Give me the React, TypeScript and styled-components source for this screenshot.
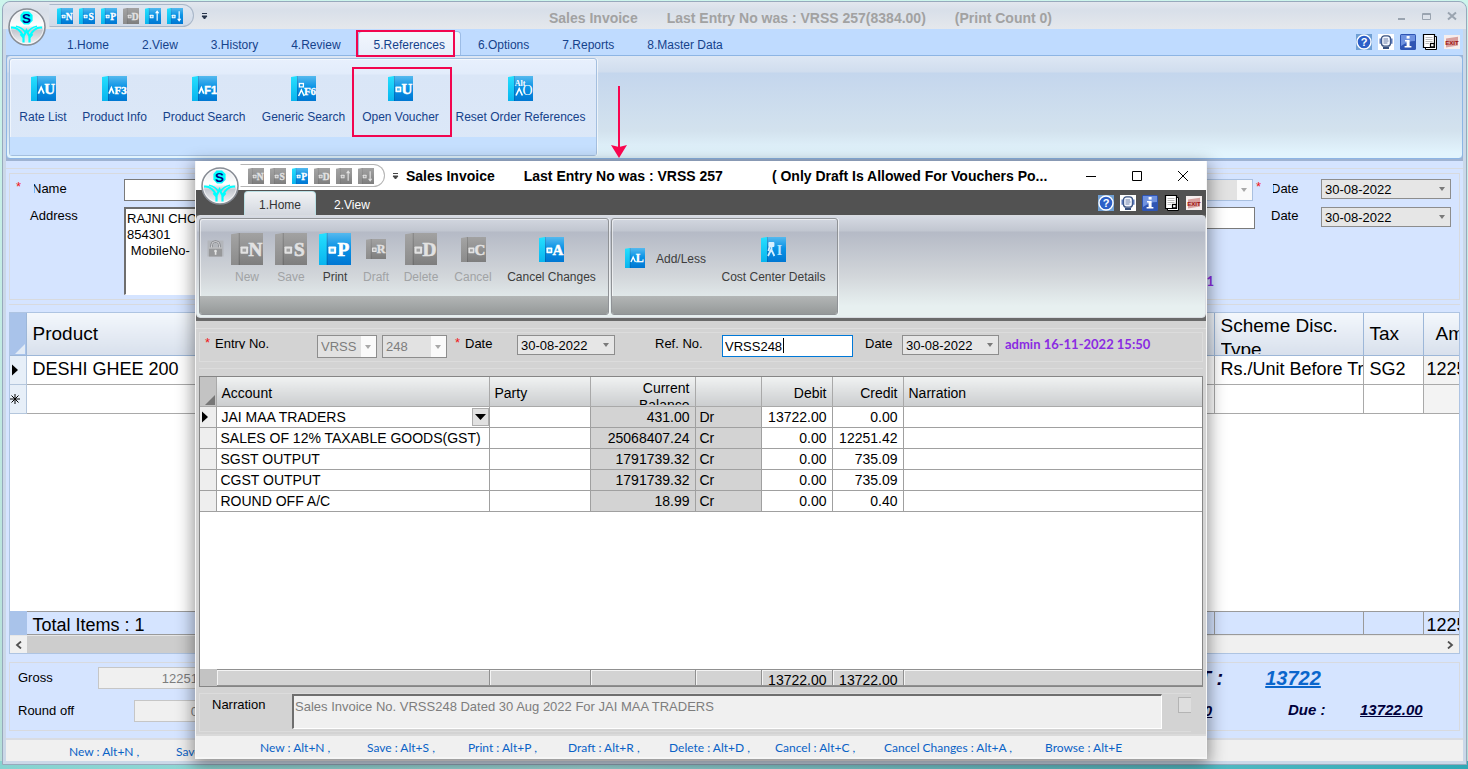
import React from 'react';
import styled, { createGlobalStyle, css } from 'styled-components';

const GlobalStyle = createGlobalStyle`
  *, *::before, *::after { box-sizing: border-box; }
  body { margin: 0; }
  body, button, input, textarea, select, table {
    font-family: "Liberation Sans", Arial, sans-serif;
    font-size: 13px;
  }
`;

/* ---------- drawings ---------- */

type Tone = 'blue' | 'gray';

const tones = {
  blue: { spineA: '#25e0ff', spineB: '#08b4ee', pageA: '#55b9ee', pageB: '#0a93e6', pageC: '#0077d2' },
  gray: { spineA: '#a4a4a4', spineB: '#8b8b8b', pageA: '#a2a2a2', pageB: '#939393', pageC: '#7d7d7d' },
};

interface BookProps {
  size: number;
  tone?: Tone;
  glyph?: string;
  kind?: 'key' | 'caret' | 'both' | 'alt' | 'up' | 'down' | 'tree';
}

const BookSvg = styled.svg`
  display: block;
  flex: none;
`;

const Book = ({ size, tone = 'blue', glyph = '', kind = 'key' }: BookProps) => {
  const c = tones[tone];
  const ink = tone === 'blue' ? '#ffffff' : '#e2e2e2';
  const long = glyph.length > 1;
  return (
    <BookSvg width={size} height={size} viewBox="0 0 25 25" aria-hidden="true">
      <defs>
        <linearGradient id={`spine-${tone}`} x1="0" y1="0" x2="0" y2="1">
          <stop offset="0" stopColor={c.spineA} />
          <stop offset="1" stopColor={c.spineB} />
        </linearGradient>
        <linearGradient id={`page-${tone}`} x1="0" y1="0" x2="0" y2="1">
          <stop offset="0" stopColor={c.pageA} />
          <stop offset="0.45" stopColor={c.pageB} />
          <stop offset="1" stopColor={c.pageC} />
        </linearGradient>
      </defs>
      <rect x="5" y="0" width="20" height="25" fill={`url(#page-${tone})`} />
      <path d="M0 1 L6 0 V25 H0Z" fill={`url(#spine-${tone})`} />
      <rect x="6" y="0" width="1" height="25" fill="#00000022" />
      {(kind === 'key' || kind === 'up' || kind === 'down') && (
        <>
          <rect x="7.4" y="10.6" width="6" height="5.6" rx="0.6" fill={ink} />
          <rect x="9" y="12.2" width="2.8" height="2.4" fill={c.pageA} />
        </>
      )}
      {kind === 'key' && (
        <text x="19" y="18" textAnchor="middle" fontFamily="Liberation Serif, serif" fontWeight="700" fontSize="15" stroke={ink} strokeWidth="0.5" fill={ink}>{glyph}</text>
      )}
      {kind === 'up' && <path d="M19 20V5M16.6 8.2L19 5L21.4 8.2" stroke={ink} strokeWidth="1.8" fill="none" />}
      {kind === 'down' && <path d="M19 5V20M16.6 16.8L19 20L21.4 16.8" stroke={ink} strokeWidth="1.8" fill="none" />}
      {kind === 'caret' && (
        <>
          <path d={long ? 'M7 17.6L9.4 12L11.8 17.6' : 'M7.4 17.6L10.2 11.4L13 17.6'} stroke={ink} strokeWidth="1.7" fill="none" />
          <text
            x="18.6"
            y="18"
            textAnchor="middle"
            fontFamily={glyph === 'F1' ? 'Liberation Sans, sans-serif' : 'Liberation Serif, serif'}
            fontWeight="700"
            fontSize={long ? 11 : 15}
            stroke={ink}
            strokeWidth="0.4"
            fill={ink}
          >
            {glyph}
          </text>
        </>
      )}
      {kind === 'both' && (
        <>
          <rect x="8.4" y="7.5" width="4" height="3.4" fill="none" stroke={ink} strokeWidth="1.3" />
          <path d="M7.6 20L10.4 14L13.2 20" stroke={ink} strokeWidth="1.5" fill="none" />
          <text x="19" y="19" textAnchor="middle" fontFamily="Liberation Serif, serif" fontWeight="700" fontSize="11" stroke={ink} strokeWidth="0.3" fill={ink}>{glyph}</text>
        </>
      )}
      {kind === 'alt' && (
        <>
          <text x="12" y="10" textAnchor="middle" fontFamily="Liberation Serif, serif" fontWeight="700" fontSize="8" fill={ink}>Alt</text>
          <path d="M8 19.5L11.2 12.6L14.4 19.5" stroke={ink} strokeWidth="1.6" fill="none" />
          <text x="19.6" y="18.5" textAnchor="middle" fontFamily="Liberation Serif, serif" fontSize="14" fill={ink}>{glyph}</text>
        </>
      )}
      {kind === 'tree' && (
        <>
          <rect x="7.4" y="5" width="6" height="5" rx="1" fill="#d8f0ff" />
          <path d="M10.5 10V15M10.5 12L7 19M10.5 13L13.4 19M8.5 10L7.4 14" stroke="#d8f0ff" strokeWidth="1.8" fill="none" />
          <text x="18.6" y="18" textAnchor="middle" fontFamily="Liberation Serif, serif" fontWeight="700" fontSize="14" fill="#b9e4ff">{glyph}</text>
        </>
      )}
    </BookSvg>
  );
};

const LogoSvg = styled.svg`
  position: absolute;
  left: 4px;
  top: 4px;
  z-index: 2;
`;

const Logo = () => (
  <LogoSvg width="40" height="42" viewBox="0 0 40 42" role="img" aria-label="Application menu">
    <defs>
      <linearGradient id="orb" x1="0" y1="0" x2="0" y2="1">
        <stop offset="0" stopColor="#e4e6ea" />
        <stop offset="0.45" stopColor="#ffffff" />
        <stop offset="0.6" stopColor="#c4c8d0" />
        <stop offset="1" stopColor="#f4f5f7" />
      </linearGradient>
    </defs>
    <circle cx="20" cy="21" r="18" fill="url(#orb)" stroke="#888d95" strokeWidth="1.6" />
    <circle cx="20" cy="21" r="16.6" fill="none" stroke="#ffffffb0" strokeWidth="1" />
    <path d="M16.5 5.6H22L25.6 9V14.8L22 18.6H17L13.4 14.8V9Z" fill="#00ffff" />
    <text x="19.5" y="17" textAnchor="middle" fontFamily="Liberation Sans, sans-serif" fontWeight="700" fontSize="13.5" fill="#000080">S</text>
    <path
      d="M4 21.6C9 21 13 23.5 16.5 30.5L19.5 24.5L22.5 30.5C26 23.5 30 21 35 21.6"
      fill="none"
      stroke="#00ffff"
      strokeWidth="2.2"
    />
    <path d="M9 20.2C13 21 16 22.5 18 26M30 20.2C26 21 23 22.5 21 26" fill="none" stroke="#00ffff" strokeWidth="1.6" />
    <path d="M13.6 28L16.5 31.6V36.6M25.4 28L22.5 31.6V36.6" fill="none" stroke="#00ffff" strokeWidth="2.2" />
  </LogoSvg>
);

const Lock = () => (
  <svg width="17" height="17" viewBox="0 0 17 17" aria-hidden="true">
    <rect x="0.5" y="0.5" width="16" height="16" fill="#b3b6bb" />
    <path d="M4.5 8V5.5A4 4 0 0 1 12.5 5.5V8" fill="none" stroke="#85878b" strokeWidth="2.4" />
    <path d="M4.5 8V5.5A4 4 0 0 1 12.5 5.5V8" fill="none" stroke="#dcdddf" strokeWidth="0.9" />
    <rect x="2" y="7.5" width="13" height="9" fill="#97989a" />
    <rect x="2" y="7.5" width="13" height="1" fill="#cfd0d2" />
    <circle cx="8.5" cy="11" r="1.3" fill="#e4e4e4" />
    <rect x="7.8" y="11" width="1.6" height="3.8" fill="#e4e4e4" />
  </svg>
);

const Tools = styled.div`
  display: flex;
  gap: 6px;
  align-items: center;
  margin-left: auto;
`;

const ToolButton = styled.button`
  display: block;
  width: 16px;
  height: 16px;
  padding: 0;
  border: 0;
  background: none;
  svg { display: block; }
`;

const ToolIcons = () => (
  <Tools>
    <ToolButton aria-label="Help">
      <svg width="16" height="16" viewBox="0 0 16 16">
        <rect width="16" height="16" fill="#6f9fd4" />
        <circle cx="8" cy="8" r="7" fill="#2c5fc8" stroke="#ffffff" strokeWidth="1.4" />
        <text x="8" y="12.2" textAnchor="middle" fontFamily="Liberation Sans, sans-serif" fontWeight="700" fontSize="11" fill="#fff">?</text>
      </svg>
    </ToolButton>
    <ToolButton aria-label="Remarks">
      <svg width="16" height="16" viewBox="0 0 16 16">
        <rect width="16" height="16" fill="#fff" />
        <rect x="3.5" y="1.8" width="9" height="10.4" rx="3" fill="#f4f7ff" stroke="#37507e" strokeWidth="1.3" />
        <path d="M5.5 5H10M5.5 7H10.5M5.5 9H9.5" stroke="#6b7fa6" strokeWidth="1" />
        <path d="M2.4 4.5V9.8M13.6 4.5V9.8" stroke="#5877b8" strokeWidth="1.8" />
        <path d="M5 14H11" stroke="#37507e" strokeWidth="2" />
      </svg>
    </ToolButton>
    <ToolButton aria-label="Information">
      <svg width="16" height="16" viewBox="0 0 16 16">
        <rect width="16" height="16" rx="1.5" fill="#2f55b4" />
        <path d="M1 1H15V7C10 7 5 9 1 12Z" fill="#6f92e0" />
        <rect x="6.6" y="2" width="3" height="2.6" fill="#fff" />
        <path d="M5 6H9.6V12H11.4V13.6H4.6V12H6.6V7.6H5Z" fill="#fff" />
      </svg>
    </ToolButton>
    <ToolButton aria-label="Notes">
      <svg width="16" height="16" viewBox="0 0 16 16">
        <path d="M3.5 2.5H14.5V15.5H3.5Z" fill="#fff" stroke="#000" strokeWidth="1" />
        <path d="M1.5 0.5H12.5V13.5H1.5Z" fill="#fff" stroke="#000" strokeWidth="1.2" />
        <path d="M3.5 3.5H10.5M3.5 5.5H10.5M3.5 7.5H10.5M3.5 9.5H7" stroke="#b4b4b4" strokeWidth="0.9" />
        <rect x="8.5" y="9.5" width="3.6" height="3.4" fill="#fff" stroke="#000" strokeWidth="1.2" />
      </svg>
    </ToolButton>
    <ToolButton aria-label="Close application">
      <svg width="16" height="16" viewBox="0 0 16 16">
        <rect y="1" width="16" height="14" fill="#f6eeed" />
        <path d="M2 4.6L14 2.8V11.6L2 13.4Z" fill="#d8a09e" />
        <text x="8" y="11" textAnchor="middle" fontFamily="Liberation Sans, sans-serif" fontWeight="700" fontSize="6" fill="#9c0f0f">EXIT</text>
      </svg>
    </ToolButton>
  </Tools>
);

/* ---------- desktop and windows ---------- */

const Desktop = styled.div`
  position: relative;
  display: flex;
  flex-direction: column;
  min-height: 100vh;
  padding: 1px 1px 4px 2px;
  background: linear-gradient(to right, #86d3d0, #a2dcdc 40%, #2fa9b6) bottom / 100% 8px no-repeat,
    linear-gradient(#cdf5ec, #b4dfd8);
`;

const MainWindow = styled.main`
  flex: 1;
  display: flex;
  flex-direction: column;
  padding-bottom: 3px;
  border: 1px solid #97a9bc;
  border-radius: 8px 8px 0 0;
  background: #cbd8e8;
`;

const Titlebar = styled.header`
  position: relative;
  display: flex;
  align-items: center;
  height: 27px;
  padding-left: 46px;
  border-radius: 8px 8px 0 0;
  background: linear-gradient(#e3e7ee, #d8dfe9 30%, #e5e8ec);
`;

const QuickBar = styled.div<{ $plain?: boolean }>`
  display: flex;
  align-items: center;
  gap: 6px;
  height: 23px;
  padding: 0 10px 0 7px;
  border: 1px solid ${p => (p.$plain ? '#b4b4b4' : '#a9b7c9')};
  border-left-color: transparent;
  border-radius: 0 12px 12px 0;
  background: ${p => (p.$plain ? '#ffffff' : 'linear-gradient(#dfe6f0, #d0dae8)')};
`;

const QuickButton = styled.button`
  padding: 0;
  border: 0;
  background: none;
`;

const MoreButton = styled.button`
  display: block;
  width: 8px;
  padding: 0;
  margin-left: 7px;
  border: 0;
  background: none;
  svg { display: block; }
`;

const More = ({ color }: { color: string }) => (
  <MoreButton aria-label="Customise toolbar">
    <svg width="7" height="8" viewBox="0 0 7 8">
      <path d="M1 1.5H6M1 4H6L3.5 7Z" stroke={color} strokeWidth="1" fill={color} />
    </svg>
  </MoreButton>
);

const Title = styled.h1<{ $dim?: boolean }>`
  flex: 1;
  display: flex;
  justify-content: ${p => (p.$dim ? 'center' : 'flex-start')};
  gap: 29px;
  margin: 0;
  padding: ${p => (p.$dim ? '5px 4px 0 0' : '0 0 0 6px')};
  font-size: 14px;
  line-height: 20px;
  white-space: nowrap;
  color: ${p => (p.$dim ? '#a2a2a2' : '#000000')};
`;

const DraftNote = styled.span`
  padding-left: 20px;
`;

const Controls = styled.div<{ $wide?: boolean }>`
  display: flex;
  gap: ${p => (p.$wide ? 34 : 13)}px;
  padding-right: ${p => (p.$wide ? 17 : 8)}px;
  button {
    width: 12px;
    height: 12px;
    padding: 0;
    border: 0;
    background: none;
  }
  svg { display: block; }
`;

const WindowControls = ({ wide }: { wide?: boolean }) => {
  const ink = wide ? '#000000' : '#9aa4b0';
  return (
    <Controls $wide={wide}>
      <button aria-label="Minimise">
        <svg width="12" height="12"><path d={wide ? 'M1 6.5H11' : 'M2 9H9'} stroke={ink} strokeWidth={wide ? 1 : 2} /></svg>
      </button>
      <button aria-label="Maximise">
        <svg width="12" height="12">
          <path d={wide ? 'M1.5 1.5H10.5V10.5H1.5Z' : 'M1.5 3.5H9.5V9.5H1.5ZM1.5 4.5H9.5'} stroke={ink} fill="none" />
        </svg>
      </button>
      <button aria-label="Close">
        <svg width="12" height="12"><path d={wide ? 'M1 1L11 11M11 1L1 11' : 'M2 2.5L10 9.5M10 2.5L2 9.5'} stroke={ink} strokeWidth={wide ? 1 : 2} /></svg>
      </button>
    </Controls>
  );
};

/* ---------- ribbon ---------- */

const TabStrip = styled.nav<{ $dark?: boolean }>`
  display: flex;
  align-items: center;
  height: ${p => (p.$dark ? 25 : 26)}px;
  padding: ${p => (p.$dark ? '0 4px 0 48px' : '0 3px 0 45px')};
  margin: ${p => (p.$dark ? '0' : '0 3px')};
  background: ${p => (p.$dark ? '#525252' : '#bfdbff')};
`;

const highlight = css`
  content: '';
  position: absolute;
  z-index: 2;
  border: 2px solid #f2054f;
  pointer-events: none;
`;

const Tab = styled.button<{ $active?: boolean; $dark?: boolean; $marked?: boolean }>`
  position: relative;
  align-self: flex-end;
  height: 24px;
  padding: ${p => (p.$dark ? '2px 14px 0' : '3px 15px 0')};
  margin-right: ${p => (p.$dark ? 3 : 1)}px;
  border: 1px solid transparent;
  border-bottom: 0;
  border-radius: 4px 4px 0 0;
  background: none;
  font-size: 12px;
  white-space: nowrap;
  color: ${p => (p.$dark ? '#ffffff' : '#15428b')};
  ${p => p.$active && !p.$dark && css`
    border-color: #9cbce6;
    background: linear-gradient(#f2f6fd, #e6eefa);
  `}
  ${p => p.$active && p.$dark && css`
    border-color: #b9dfe4;
    background: linear-gradient(#f1f3f5, #d3d7df);
    color: #333333;
  `}
  ${p => p.$marked && css`
    &::after { ${highlight} inset: -2px 5px -2px -3px; }
  `}
`;

const Ribbon = styled.div<{ $dark?: boolean }>`
  position: relative;
  display: flex;
  gap: 2px;
  height: ${p => (p.$dark ? 103 : 104)}px;
  padding: 2px;
  border: 1px solid ${p => (p.$dark ? '#d8dbe0' : '#8db5e4')};
  border-radius: 4px;
  background: ${p =>
    p.$dark
      ? 'linear-gradient(#d6dae3, #c1c6d0 15px, #b5bac6 16px, #d2d6da 60px, #e7f0f0 90px)'
      : 'linear-gradient(#dde7f4, #d0ddee 16px, #c4d6ed 17px, #d3e2ee 75px, #e2f4fd 97px)'};
`;

const RibbonShade = styled.div<{ $dark?: boolean }>`
  background: ${p => (p.$dark ? '#6a6a6a' : '#9fb3d2')};
  margin: ${p => (p.$dark ? '0' : '0 3px')};
  padding-bottom: ${p => (p.$dark ? 3 : 2)}px;
`;

const Group = styled.section<{ $dark?: boolean }>`
  display: flex;
  flex-direction: column;
  border: 1px solid ${p => (p.$dark ? '#8f9296' : '#a4bfdf')};
  border-radius: 3px;
  overflow: ${p => (p.$dark ? 'hidden' : 'visible')};
  box-shadow: inset 1px 1px 0 #ffffff90, 1px 0 0 #ffffffa0;
  background: ${p => (p.$dark ? 'none' : 'linear-gradient(#e8f0fd, #e2ecfb 15px, #dae6f7 16px, #dce8f8)')};
`;

const GroupItems = styled.div<{ $dark?: boolean }>`
  flex: 1;
  display: flex;
  padding: ${p => (p.$dark ? '13px 4px 0 3px' : '13px 3px 0 1px')};
`;

const GroupFoot = styled.div<{ $dark?: boolean }>`
  height: 18px;
  background: ${p => (p.$dark ? 'linear-gradient(#b3b6b6, #959999)' : '#c5dffe')};
`;

const Command = styled.button<{ $width: number; $dark?: boolean; $marked?: boolean; $row?: boolean }>`
  position: relative;
  display: flex;
  flex-direction: ${p => (p.$row ? 'row' : 'column')};
  align-items: center;
  gap: ${p => (p.$row ? 11 : 0)}px;
  align-self: flex-start;
  width: ${p => p.$width}px;
  padding: ${p => (p.$row ? '16px 0 0 10px' : '0')};
  border: 0;
  background: none;
  font-size: 12px;
  line-height: 16px;
  white-space: nowrap;
  color: ${p => (p.$dark ? '#3c3c3c' : '#15428b')};
  &:disabled { color: #a1a3a5; }
  ${p => p.$marked && css`
    &::after { ${highlight} inset: -5px -4px -12px -1px; }
  `}
`;

const IconSlot = styled.span<{ $tall?: boolean }>`
  display: flex;
  align-items: center;
  justify-content: center;
  height: ${p => (p.$tall ? 34 : 32)}px;
  margin-bottom: ${p => (p.$tall ? 3 : 5)}px;
`;

const LockButton = styled.button`
  align-self: flex-start;
  width: 22px;
  padding: 8px 0 0 2px;
  border: 0;
  background: none;
`;

const Arrow = styled.svg`
  position: absolute;
  left: 603px;
  top: 30px;
  z-index: 3;
`;

/* ---------- form parts ---------- */

const Body = styled.div<{ $dark?: boolean }>`
  flex: 1;
  display: flex;
  flex-direction: column;
  margin: ${p => (p.$dark ? '0' : '0 3px')};
  padding-top: 7px;
  background: ${p => (p.$dark ? '#d3d3d3' : '#d5e4ff')};
`;

const BodyInner = styled.div<{ $dark?: boolean }>`
  flex: 1;
  display: flex;
  flex-direction: column;
  padding: ${p => (p.$dark ? '3px 3px 2px' : '4px 3px 7px')};
  border-top: 1px solid ${p => (p.$dark ? '#dedede' : '#d8dbe0')};
`;

const Panel = styled.section<{ $dark?: boolean }>`
  border: 1px solid ${p => (p.$dark ? '#dcdcdc' : '#d8dade')};
`;

const GridPanel = styled.section<{ $dark?: boolean }>`
  flex: 1;
  display: flex;
  flex-direction: column;
  margin: ${p => (p.$dark ? '6px 0 6px' : '4px 0 8px')};
  padding-top: 7px;
  border: 1px solid ${p => (p.$dark ? '#dcdcdc' : '#d8dade')};
  border-bottom: 0;
  border-left: 0;
  border-right: 0;
`;

const Star = styled.span`
  color: #f01818;
  font-size: 13px;
  line-height: 16px;
`;

const Label = styled.label`
  font-size: 13px;
  line-height: 16px;
  white-space: nowrap;
  color: #000000;
`;

const ClippedLabel = styled(Label)<{ $side: 'left' | 'bottom' }>`
  display: block;
  overflow: hidden;
  ${p => (p.$side === 'left' ? 'clip-path: inset(0 0 0 2px);' : 'height: 13px;')}
`;

const SelectBox = styled.span<{ $h: number }>`
  position: relative;
  display: block;
  height: ${p => p.$h}px;
  svg { position: absolute; right: 6px; top: 50%; margin-top: -2px; pointer-events: none; }
`;

const NativeSelect = styled.select<{ $look: 'date' | 'off' | 'offBlue' }>`
  appearance: none;
  display: block;
  width: 100%;
  height: 100%;
  padding: 0 0 0 3px;
  border: 1px solid ${p => (p.$look === 'offBlue' ? '#a9c0e0' : '#8d8d8d')};
  border-radius: 0;
  background: ${p => (p.$look === 'date' ? '#e6e6e6' : 'linear-gradient(to left, #fafafa 15px, #e2e2e2 15px)')};
  color: ${p => (p.$look === 'date' ? '#000000' : '#7d7d7d')};
  opacity: 1;
`;

const Picker = ({ id, value, look = 'date', h = 20, label }: { id: string; value: string; look?: 'date' | 'off' | 'offBlue'; h?: number; label?: string }) => (
  <SelectBox $h={h}>
    <NativeSelect id={id} $look={look} disabled={look !== 'date'} defaultValue={value} aria-label={label}>
      <option>{value}</option>
    </NativeSelect>
    <svg width="6" height="4"><path d="M0 0H6L3 4Z" fill={look === 'date' ? '#7a7a7a' : '#a8a8a8'} /></svg>
  </SelectBox>
);

const TextBox = styled.input<{ $focus?: boolean }>`
  display: block;
  width: 100%;
  height: 22px;
  padding: 1px 2px;
  border: ${p => (p.$focus ? '1px solid #0078d7' : '1px solid #7a7a7a')};
  outline: 0;
  background: #ffffff;
  color: #000000;
  font-size: 13px;
  &:disabled {
    border-color: #c6c6c6;
    background: #f0f0f0;
    color: #7d7d7d;
    text-align: right;
  }
`;

const RefBox = styled.span`
  position: relative;
  display: block;
  &::after {
    content: '';
    position: absolute;
    left: 61px;
    top: 3px;
    width: 1px;
    height: 15px;
    background: #000000;
  }
`;

const Area = styled.textarea<{ $off?: boolean }>`
  display: block;
  width: 100%;
  padding: ${p => (p.$off ? '3px 1px' : '2px 1px')};
  border: 1px solid #ffffff;
  border-top: 2px solid #6e6e6e;
  border-left: 2px solid #6e6e6e;
  border-radius: 0;
  background: ${p => (p.$off ? '#f0f0f0' : '#ffffff')};
  color: ${p => (p.$off ? '#7d7d7d' : '#000000')};
  font-size: 13px;
  line-height: 16px;
  resize: none;
  overflow: hidden;
`;

const NarrationArea = styled(Area)`
  height: 35px;
`;

const Stamp = styled.span`
  font-family: Lato, sans-serif;
  font-size: 13px;
  font-weight: 700;
  line-height: 16px;
  white-space: nowrap;
  color: #8a2be2;
`;

const PartyPanel = styled(Panel)`
  display: flex;
  justify-content: space-between;
  height: 127px;
  padding: 5px 8px 0 6px;
`;

const PartyFields = styled.div`
  display: grid;
  grid-template-columns: 14px 94px 300px;
  grid-template-rows: 22px 88px;
  row-gap: 6px;
`;

const DateFields = styled.div`
  display: grid;
  grid-template-columns: 240px 18px 50px 130px;
  grid-template-rows: 22px 22px 22px;
  row-gap: 6px;
`;

const LongBox = styled.div`
  margin-right: -2px;
`;

const MainStamp = styled.div`
  grid-column: 1;
  padding: 38px 39px 0 0;
  text-align: right;
`;

const Pad = styled.div<{ $t?: number; $l?: number }>`
  padding: ${p => p.$t || 0}px 0 0 ${p => p.$l || 0}px;
`;

/* ---------- grids ---------- */

const Sheet = styled.div<{ $dark?: boolean }>`
  flex: 1;
  display: flex;
  flex-direction: column;
  border: 1px solid ${p => (p.$dark ? '#858585' : '#aec4e2')};
  background: #ffffff;
  overflow: hidden;
`;

const Spacer = styled.div`
  flex: 1;
`;

const ItemTable = styled.table`
  width: 100%;
  table-layout: fixed;
  border-collapse: collapse;
  font-size: 18px;
  th, td {
    height: 29px;
    padding: 0 0 0 6px;
    border: solid #a9a9a9;
    border-width: 0 1px 1px 0;
    font-weight: 400;
    text-align: left;
    white-space: nowrap;
    overflow: hidden;
  }
  thead th {
    height: 42px;
    border-color: #9db7d8;
    background: linear-gradient(#f3f7fc, #d8e0ec);
    font-size: 19px;
  }
  thead th:first-child { background: #a9c3ea; vertical-align: bottom; }
  th:first-child { padding: 0; }
  tbody th { background: #e7eff8; border-color: #b4c6dc; }
  td:last-child, th:last-child { border-right: 0; }
  tbody td:last-child { background: #f3f3f3; padding-left: 3px; text-overflow: clip; }
`;

const TotalsTable = styled(ItemTable)`
  td {
    height: 23px;
    padding-top: 4px;
    border-color: #9a9a9a;
    border-top: 1px solid #9a9a9a;
    background: #d5e4ff;
    line-height: 18px;
  }
  td:first-child { background: #a9c3ea; border-color: #a9c3ea; }
  tbody td:last-child { background: #d5e4ff; }
`;

const TwoLines = styled.div`
  height: 41px;
  padding-top: 1px;
  line-height: 24px;
  white-space: normal;
  overflow: hidden;
`;

const Inset = styled.span`
  padding-left: 6px;
`;

const Scroller = styled.div`
  display: flex;
  height: 18px;
  border-top: 1px solid #e6e6e6;
  background: #f0f0f0;
  button {
    width: 17px;
    padding: 0;
    border: 0;
    background: #f0f0f0;
  }
  svg { display: block; margin: auto; }
`;

const Thumb = styled.div`
  width: 60%;
  background: #cdcdcd;
`;

const ScrollTrack = styled.div`
  flex: 1;
`;

const EntryTable = styled.table`
  width: 100%;
  table-layout: fixed;
  border-collapse: collapse;
  font-size: 14px;
  th, td {
    height: 21px;
    padding: 0 5px 0 4px;
    border: solid #a0a0a0;
    border-width: 0 1px 1px 0;
    font-weight: 400;
    text-align: left;
    white-space: nowrap;
    overflow: hidden;
  }
  thead th {
    height: 29px;
    padding-top: 3px;
    padding-left: 5px;
    border-color: #a9a9a9;
    background: linear-gradient(#f0f2f2, #cbcdcf);
  }
  thead th:first-child { background: #c3c3c3; padding: 0; vertical-align: bottom; }
  tbody th { padding: 0; background: #eeeeee; }
  td:last-child, th:last-child { border-right: 0; }
`;

const Num = styled.td<{ $shade?: boolean }>`
  && { text-align: right; ${p => p.$shade && 'background: #d3d3d3;'} }
`;

const NumHead = styled.th`
  && { text-align: right; }
`;

const Side = styled.td`
  background: #d3d3d3;
`;

const BalanceHead = styled.div`
  height: 25px;
  line-height: 17px;
  white-space: normal;
  overflow: hidden;
`;

const AccountCell = styled.div`
  display: flex;
  align-items: center;
  justify-content: space-between;
  margin-right: -5px;
  padding-left: 1px;
  button {
    width: 17px;
    height: 18px;
    padding: 0;
    border: 1px solid #adadad;
    background: #e1e1e1;
  }
  svg { display: block; margin: auto; }
`;

const SumTable = styled(EntryTable)`
  td {
    height: 16px;
    padding-top: 1px;
    border-color: #909090;
    border-top: 1px solid #909090;
    background: #d3d3d3;
    box-shadow: inset 1px 1px 0 #f4f4f4;
  }
  td:first-child { background: #c3c3c3; border-color: #c3c3c3; box-shadow: none; }
`;

const Clip = styled.div`
  height: 14px;
  line-height: 19px;
  overflow: hidden;
`;

const BlockSvg = styled.svg`
  display: block;
`;

const Marker = () => (
  <BlockSvg width="15" height="12" viewBox="0 0 15 12" aria-hidden="true">
    <path d="M2 0.5L8 6L2 11.5Z" fill="#000" />
  </BlockSvg>
);

const Corner = ({ color }: { color: string }) => (
  <BlockSvg width="15" height="12" viewBox="0 0 15 12" aria-hidden="true">
    <path d="M15 1V11H5Z" fill={color} />
  </BlockSvg>
);

/* ---------- bottom areas ---------- */

const TotalsPanel = styled(Panel)`
  display: flex;
  justify-content: space-between;
  height: 69px;
  padding: 4px 37px 0 8px;
`;

const GrossFields = styled.div`
  display: grid;
  grid-template-columns: 80px 36px 85px;
  grid-template-rows: 22px 22px;
  row-gap: 11px;
  align-items: center;
`;

const WideCell = styled.div`
  grid-column: 2 / 4;
`;

const BigFigure = styled.a`
  color: #0a66cc;
`;

const NetGrid = styled.div`
  display: grid;
  grid-template-columns: 117px 72px 62px;
  grid-template-rows: 22px 24px;
  row-gap: 8px;
  align-items: center;
  font-size: 15px;
  font-style: italic;
  font-weight: 700;
  color: #00003c;
`;

const NetLine = styled.div`
  grid-column: 1 / 4;
  display: flex;
  gap: 42px;
  font-size: 20px;
`;

const Hints = styled.footer<{ $dark?: boolean }>`
  display: flex;
  align-items: center;
  height: 23px;
  padding: ${p => (p.$dark ? '2px 0 0 64px' : '2px 0 0 63px')};
  margin: ${p => (p.$dark ? '0' : '0 3px')};
  border-top: 2px solid ${p => (p.$dark ? '#dadada' : '#d9dce2')};
  background: #f0f0f0;
`;

const Hint = styled.span<{ $width: number }>`
  flex: none;
  width: ${p => p.$width}px;
  font-family: Lato, sans-serif;
  font-size: 12px;
  line-height: 16px;
  white-space: nowrap;
  color: #0a62c6;
`;

const hints: [string, number][] = [
  ['New : Alt+N ,', 107],
  ['Save : Alt+S ,', 101],
  ['Print : Alt+P ,', 100],
  ['Draft : Alt+R ,', 101],
  ['Delete : Alt+D ,', 106],
  ['Cancel : Alt+C ,', 109],
  ['Cancel Changes : Alt+A ,', 161],
  ['Browse : Alt+E', 100],
];

const HintBar = ({ dark }: { dark?: boolean }) => (
  <Hints $dark={dark}>
    {(dark ? hints : hints.slice(0, 2)).map(([text, width]) => <Hint key={text} $width={width}>{text}</Hint>)}
  </Hints>
);

/* ---------- voucher dialog ---------- */

const Dialog = styled.section`
  position: absolute;
  top: 161px;
  left: 195px;
  right: 261px;
  bottom: 10px;
  display: flex;
  flex-direction: column;
  border: solid #f6f6f6;
  border-width: 0 1px 2px;
  background: #d3d3d3;
  box-shadow: 0 5px 16px 2px rgba(0, 0, 0, 0.42);
`;

const DialogTitle = styled(Titlebar)`
  height: 29px;
  border-radius: 0;
  background: #ffffff;
  padding-left: 44px;
`;

const EntryPanel = styled(Panel)`
  display: grid;
  grid-template-columns: 10px 102px 60px 5px 65px 8px 10px 52px 98px 40px 67px 131px 12px 37px 97px 6px auto;
  align-items: start;
  height: 30px;
  padding: 2px 0 0 5px;
`;

const NarrationPanel = styled(Panel)`
  display: grid;
  grid-template-columns: 80px 1fr 13px;
  height: 39px;
  margin-right: 12px;
  padding-left: 12px;
  border-right: 0;
  overflow: hidden;
`;

const AreaSlot = styled.div`
  padding-right: 16px;
`;

const TickBox = styled.input`
  appearance: none;
  width: 16px;
  height: 16px;
  margin: 3px 0 0;
  border: 1px solid #b4b4b4;
  background: #dedede;
`;

const entries = [
  ['JAI MAA TRADERS', '431.00', 'Dr', '13722.00', '0.00'],
  ['SALES OF 12% TAXABLE GOODS(GST)', '25068407.24', 'Cr', '0.00', '12251.42'],
  ['SGST OUTPUT', '1791739.32', 'Cr', '0.00', '735.09'],
  ['CGST OUTPUT', '1791739.32', 'Cr', '0.00', '735.09'],
  ['ROUND OFF A/C', '18.99', 'Cr', '0.00', '0.40'],
];

const EntryColumns = () => (
  <colgroup>
    {[16, 273, 101, 105, 66, 71, 71].map((w, i) => <col key={i} width={w} />)}
    <col />
  </colgroup>
);

const ItemColumns = () => (
  <colgroup>
    <col width={16} />
    <col />
    <col width={149} />
    <col width={60} />
    <col width={36} />
  </colgroup>
);

const quick: { name: string; glyph?: string; kind?: 'up' | 'down' }[] = [
  { name: 'New', glyph: 'N' },
  { name: 'Save', glyph: 'S' },
  { name: 'Print', glyph: 'P' },
  { name: 'Delete', glyph: 'D' },
  { name: 'Previous', kind: 'up' },
  { name: 'Next', kind: 'down' },
];

const Quick = ({ plain }: { plain?: boolean }) => (
  <QuickBar $plain={plain}>
    {quick.map(q => (
      <QuickButton key={q.name} aria-label={q.name}>
        <Book
          size={16}
          glyph={q.glyph}
          kind={q.kind || 'key'}
          tone={(plain ? q.name === 'Print' : q.name !== 'Delete') ? 'blue' : 'gray'}
        />
      </QuickButton>
    ))}
  </QuickBar>
);

const menu = ['1.Home', '2.View', '3.History', '4.Review', '5.References', '6.Options', '7.Reports', '8.Master Data'];

const commands: { text: string; width: number; glyph: string; kind: BookProps['kind'] }[] = [
  { text: 'Rate List', width: 64, glyph: 'U', kind: 'caret' },
  { text: 'Product Info', width: 79, glyph: 'F3', kind: 'caret' },
  { text: 'Product Search', width: 100, glyph: 'F1', kind: 'caret' },
  { text: 'Generic Search', width: 99, glyph: 'F6', kind: 'both' },
  { text: 'Open Voucher', width: 95, glyph: 'U', kind: 'key' },
  { text: 'Reset Order References', width: 145, glyph: 'O', kind: 'alt' },
];

const voucherCommands: { text: string; width: number; glyph: string; size: number; off?: boolean }[] = [
  { text: 'New', width: 44, glyph: 'N', size: 32, off: true },
  { text: 'Save', width: 44, glyph: 'S', size: 32, off: true },
  { text: 'Print', width: 44, glyph: 'P', size: 32 },
  { text: 'Draft', width: 38, glyph: 'R', size: 20, off: true },
  { text: 'Delete', width: 52, glyph: 'D', size: 32, off: true },
  { text: 'Cancel', width: 52, glyph: 'C', size: 25, off: true },
  { text: 'Cancel Changes', width: 105, glyph: 'A', size: 25 },
];

const VoucherDialog = () => (
  <Dialog role="dialog" aria-label="Sales Invoice voucher">
    <DialogTitle>
      <Logo />
      <Quick plain />
      <More color="#444444" />
      <Title as="h2">
        <span>Sales Invoice</span>
        <span>Last Entry No was : VRSS 257</span>
        <DraftNote>( Only Draft Is Allowed For Vouchers Po...</DraftNote>
      </Title>
      <WindowControls wide />
    </DialogTitle>
    <TabStrip $dark>
      <Tab $dark $active>1.Home</Tab>
      <Tab $dark>2.View</Tab>
      <ToolIcons />
    </TabStrip>
    <RibbonShade $dark>
      <Ribbon $dark>
        <Group $dark>
          <GroupItems $dark>
            <LockButton disabled aria-label="Lock"><Lock /></LockButton>
            {voucherCommands.map(c => (
              <Command key={c.text} $width={c.width} $dark disabled={c.off}>
                <IconSlot $tall><Book size={c.size} glyph={c.glyph} tone={c.off ? 'gray' : 'blue'} /></IconSlot>
                {c.text}
              </Command>
            ))}
          </GroupItems>
          <GroupFoot $dark />
        </Group>
        <Group $dark>
          <GroupItems $dark>
            <Command $width={99} $dark $row>
              <Book size={20} glyph="L" kind="caret" />
              <Pad $t={1}>Add/Less</Pad>
            </Command>
            <Command $width={119} $dark>
              <IconSlot $tall><Book size={25} glyph="I" kind="tree" /></IconSlot>
              Cost Center Details
            </Command>
          </GroupItems>
          <GroupFoot $dark />
        </Group>
      </Ribbon>
    </RibbonShade>
    <Body $dark>
      <BodyInner $dark>
        <EntryPanel $dark>
          <Star>*</Star>
          <Pad $t={1}><ClippedLabel $side="bottom" htmlFor="series">Entry No.</ClippedLabel></Pad>
          <Picker id="series" value="VRSS" look="off" h={23} />
          <span />
          <Picker id="entry" value="248" look="off" h={23} label="Entry number" />
          <span />
          <Star>*</Star>
          <Pad $t={1}><Label htmlFor="entry-date">Date</Label></Pad>
          <Picker id="entry-date" value="30-08-2022" />
          <span />
          <Pad $t={1}><Label htmlFor="ref-no">Ref. No.</Label></Pad>
          <RefBox><TextBox id="ref-no" $focus defaultValue="VRSS248" /></RefBox>
          <span />
          <Pad $t={1}><Label htmlFor="ref-date">Date</Label></Pad>
          <Picker id="ref-date" value="30-08-2022" />
          <span />
          <Pad $t={1}><Stamp>admin 16-11-2022 15:50</Stamp></Pad>
        </EntryPanel>
        <GridPanel $dark>
          <Sheet $dark>
            <EntryTable>
              <EntryColumns />
              <thead>
                <tr>
                  <th aria-label="Row"><Corner color="#777777" /></th>
                  <th>Account</th>
                  <th>Party</th>
                  <NumHead><BalanceHead>Current Balance</BalanceHead></NumHead>
                  <th />
                  <NumHead>Debit</NumHead>
                  <NumHead>Credit</NumHead>
                  <th>Narration</th>
                </tr>
              </thead>
              <tbody>
                {entries.map(([account, balance, side, debit, credit], i) => (
                  <tr key={account}>
                    <th>{i === 0 && <Marker />}</th>
                    <td>
                      {i === 0 ? (
                        <AccountCell>
                          {account}
                          <button aria-label="Choose account">
                            <svg width="11" height="6"><path d="M0 0H11L5.5 6Z" fill="#000" /></svg>
                          </button>
                        </AccountCell>
                      ) : account}
                    </td>
                    <td />
                    <Num $shade>{balance}</Num>
                    <Side>{side}</Side>
                    <Num>{debit}</Num>
                    <Num>{credit}</Num>
                    <td />
                  </tr>
                ))}
              </tbody>
            </EntryTable>
            <Spacer />
            <SumTable>
              <EntryColumns />
              <tbody>
                <tr>
                  <td /><td /><td /><td /><td />
                  <Num><Clip>13722.00</Clip></Num>
                  <Num><Clip>13722.00</Clip></Num>
                  <td />
                </tr>
              </tbody>
            </SumTable>
          </Sheet>
        </GridPanel>
        <NarrationPanel $dark>
          <Pad $t={3}><Label htmlFor="narration">Narration</Label></Pad>
          <AreaSlot>
            <NarrationArea id="narration" $off readOnly defaultValue="Sales Invoice No. VRSS248 Dated 30 Aug 2022 For JAI MAA TRADERS" />
          </AreaSlot>
          <TickBox type="checkbox" aria-label="Lock narration" />
        </NarrationPanel>
      </BodyInner>
    </Body>
    <HintBar dark />
  </Dialog>
);

export default function App() {
  return (
    <Desktop>
      <GlobalStyle />
      <MainWindow>
        <Titlebar>
          <Logo />
          <Quick />
          <More color="#26344a" />
          <Title $dim>
            <span>Sales Invoice</span>
            <span>Last Entry No was : VRSS 257(8384.00)</span>
            <span>(Print Count 0)</span>
          </Title>
          <WindowControls />
        </Titlebar>
        <TabStrip>
          {menu.map(m => (
            <Tab key={m} $active={m === '5.References'} $marked={m === '5.References'}>{m}</Tab>
          ))}
          <ToolIcons />
        </TabStrip>
        <RibbonShade>
          <Ribbon>
            <Group>
              <GroupItems>
                {commands.map(c => (
                  <Command key={c.text} $width={c.width} $marked={c.text === 'Open Voucher'}>
                    <IconSlot><Book size={25} glyph={c.glyph} kind={c.kind} /></IconSlot>
                    {c.text}
                  </Command>
                ))}
              </GroupItems>
              <GroupFoot />
            </Group>
            <Arrow width="18" height="74" viewBox="0 0 18 74" aria-hidden="true">
              <path d="M9 0V62" stroke="#f9054f" strokeWidth="2" />
              <path d="M1 59L9 61L17 59L9 72Z" fill="#f9054f" />
            </Arrow>
          </Ribbon>
        </RibbonShade>
        <Body>
          <BodyInner>
            <PartyPanel>
              <PartyFields>
                <Pad><Star>*</Star></Pad>
                <Pad $t={2} $l={2}><ClippedLabel $side="left" htmlFor="name">Name</ClippedLabel></Pad>
                <TextBox id="name" />
                <span />
                <Pad $t={1}><Label htmlFor="address">Address</Label></Pad>
                <Area id="address" rows={5} defaultValue={'RAJNI CHOWK\n854301\n MobileNo-'} />
              </PartyFields>
              <DateFields>
                <Picker id="series-main" value="" look="offBlue" h={22} label="Series" />
                <Pad $l={3}><Star>*</Star></Pad>
                <Pad $t={2}><ClippedLabel $side="left" htmlFor="date-1">Date</ClippedLabel></Pad>
                <Picker id="date-1" value="30-08-2022" />
                <LongBox><TextBox aria-label="Reference" /></LongBox>
                <span />
                <Pad $t={1}><Label htmlFor="date-2">Date</Label></Pad>
                <Picker id="date-2" value="30-08-2022" />
                <MainStamp><Stamp>admin 16-11-2022 15:51</Stamp></MainStamp>
              </DateFields>
            </PartyPanel>
            <GridPanel>
              <Sheet>
                <ItemTable>
                  <ItemColumns />
                  <thead>
                    <tr>
                      <th aria-label="Row"><Corner color="#e2ebf6" /></th>
                      <th>Product</th>
                      <th><TwoLines>Scheme Disc. Type</TwoLines></th>
                      <th>Tax</th>
                      <th><Inset>Amount</Inset></th>
                    </tr>
                  </thead>
                  <tbody>
                    <tr>
                      <th><Marker /></th>
                      <td>DESHI GHEE 200</td>
                      <td>Rs./Unit Before Tr</td>
                      <td>SG2</td>
                      <td>12251.42</td>
                    </tr>
                    <tr>
                      <th>
                        <BlockSvg width="10" height="10" viewBox="0 0 10 10" aria-hidden="true">
                          <path d="M5 0V10M0 5H10M1.5 1.5L8.5 8.5M8.5 1.5L1.5 8.5" stroke="#000" />
                        </BlockSvg>
                      </th>
                      <td /><td /><td /><td />
                    </tr>
                  </tbody>
                </ItemTable>
                <Spacer />
                <TotalsTable>
                  <ItemColumns />
                  <tbody>
                    <tr><td /><td>Total Items : 1</td><td /><td /><td>12251.42</td></tr>
                  </tbody>
                </TotalsTable>
                <Scroller>
                  <button aria-label="Scroll left">
                    <svg width="7" height="8"><path d="M6 0.5L2 4L6 7.5" stroke="#505050" strokeWidth="1.8" fill="none" /></svg>
                  </button>
                  <Thumb />
                  <ScrollTrack />
                  <button aria-label="Scroll right">
                    <svg width="7" height="8"><path d="M1 0.5L5 4L1 7.5" stroke="#505050" strokeWidth="1.8" fill="none" /></svg>
                  </button>
                </Scroller>
              </Sheet>
            </GridPanel>
            <TotalsPanel>
              <GrossFields>
                <Label htmlFor="gross">Gross</Label>
                <WideCell><TextBox id="gross" disabled defaultValue="12251.42" /></WideCell>
                <Label htmlFor="round">Round off</Label>
                <span />
                <TextBox id="round" disabled defaultValue="0.40" />
              </GrossFields>
              <NetGrid>
                <NetLine>
                  <span>NET :</span>
                  <BigFigure href="#net">13722</BigFigure>
                </NetLine>
                <Pad $t={3} $l={12}><u>0.00</u></Pad>
                <span>Due :</span>
                <u>13722.00</u>
              </NetGrid>
            </TotalsPanel>
          </BodyInner>
        </Body>
        <HintBar />
      </MainWindow>
      <VoucherDialog />
    </Desktop>
  );
}
